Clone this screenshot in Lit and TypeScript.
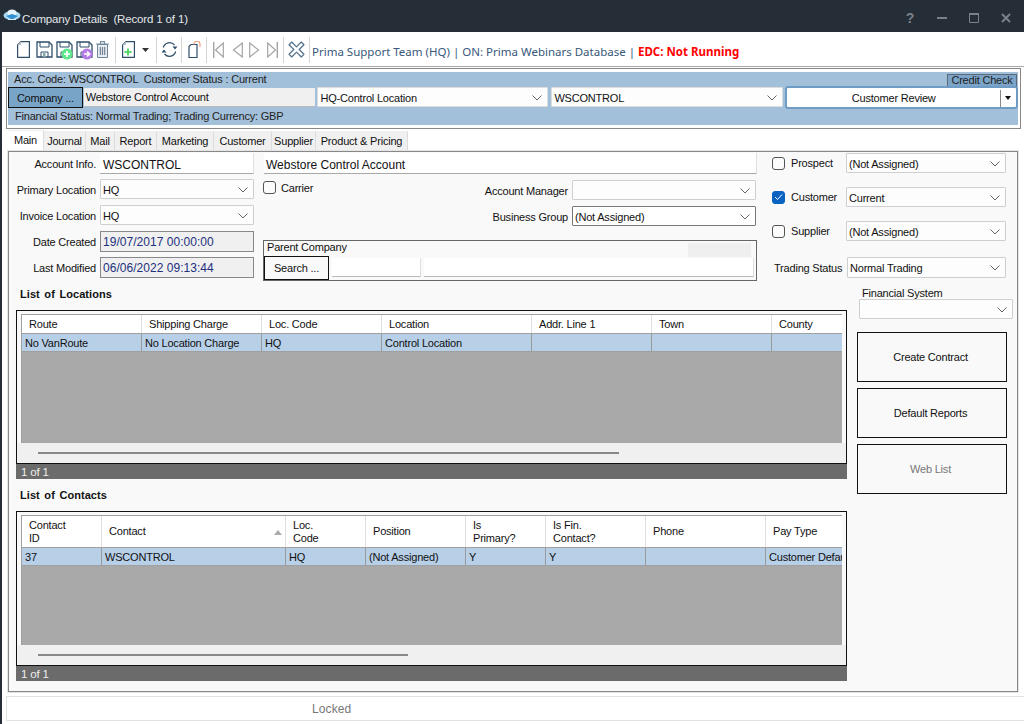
import { LitElement, html, css, svg } from "lit";
import { customElement } from "lit/decorators.js";

const navy = "#2f4f6b";
const chevron = html`<svg class="chev" width="10" height="6" viewBox="0 0 10 6"><path d="M.5.5 5 5 9.500.5" fill="none" stroke="#666" stroke-width="1"/></svg>`;

const floppy = svg`<path d="M1 1h12l3 3v12H1z" fill="#fff" stroke="${navy}" stroke-width="1.300"/><path d="M4 1v5h9V1" fill="none" stroke="${navy}"/><path d="M5 16.500V11h7v5.500" fill="none" stroke="${navy}"/><rect x="7" y="12" width="2.500" height="4" fill="#8aa"/>`;

const icons = {
  doc: html`<svg class="ic" width="13" height="17" viewBox="0 0 13 17"><path d="M4 .6h8.400v15.800H.6V4z" fill="#fff" stroke="${navy}" stroke-width="1.200"/><path d="M.6 4 4 .6v3.400z" fill="#b5c3cf"/></svg>`,
  save: html`<svg class="ic" width="17" height="17" viewBox="0 0 17 17">${floppy}</svg>`,
  saveAdd: html`<svg class="ic" width="17" height="19" viewBox="0 0 17 19">${floppy}<circle cx="11" cy="13" r="5.500" fill="#5fe88a"/><path d="M8 13h6M11 10v6" stroke="#fff" stroke-width="1.700"/></svg>`,
  saveNext: html`<svg class="ic" width="17" height="19" viewBox="0 0 17 19">${floppy}<circle cx="11" cy="13" r="5.500" fill="#b37ae8"/><path d="M8 13h4.500M11 10.500l2.500 2.500-2.500 2.500" fill="none" stroke="#fff" stroke-width="1.700"/></svg>`,
  trash: html`<svg class="ic" width="13" height="17" viewBox="0 0 13 17"><path d="M0 3h13M4.500 2.500V.7h4v1.800" fill="none" stroke="#7a8fa0" stroke-width="1.200"/><path d="M1.500 3.500h10v13h-10z" fill="#e8edf1" stroke="#6f8496"/><path d="M4.300 6v8M6.500 6v8M8.700 6v8" stroke="#6f8496" stroke-width="1.200"/></svg>`,
  docAdd: html`<svg class="ic" width="13" height="17" viewBox="0 0 13 17"><path d="M4 .6h8.400v15.800H.6V4z" fill="#fff" stroke="${navy}" stroke-width="1.200"/><path d="M.6 4 4 .6v3.400z" fill="#b5c3cf"/><path d="M2.500 11h7M6 7.500v7" stroke="#58d76a" stroke-width="2"/></svg>`,
  refresh: html`<svg class="ic" width="17" height="17" viewBox="0 0 17 17"><path d="M2.300 6.500A6.500 6.500 0 0 1 13.500 4M14.700 10.500A6.500 6.500 0 0 1 3.500 13" fill="none" stroke="${navy}" stroke-width="1.200"/><path d="M11.500 5.500h5L14 8.500zM.500 11.500h5L3 8.500z" fill="${navy}"/></svg>`,
  lock: html`<svg class="ic" width="13" height="17" viewBox="0 0 13 17"><path d="M1 5.500 3 3.500h6v13H1z" fill="#fff" stroke="${navy}" stroke-width="1.200"/><path d="M6 3.500A3 3 0 0 1 12 3v3" fill="none" stroke="#e8a080" stroke-width="1.200"/></svg>`,
  first: html`<svg class="ic" width="11" height="16" viewBox="0 0 11 16"><path d="M.7 0v16" stroke="#a4a4a4" stroke-width="1.400"/><path d="M10.300 1v14L2.500 8z" fill="#fff" stroke="#a4a4a4" stroke-width="1.200"/></svg>`,
  prev: html`<svg class="ic" width="11" height="16" viewBox="0 0 11 16"><path d="M10.300 1v14L1.500 8z" fill="#fff" stroke="#a4a4a4" stroke-width="1.200"/></svg>`,
  next: html`<svg class="ic" width="11" height="16" viewBox="0 0 11 16"><path d="M.7 1v14L9.500 8z" fill="#fff" stroke="#a4a4a4" stroke-width="1.200"/></svg>`,
  last: html`<svg class="ic" width="11" height="16" viewBox="0 0 11 16"><path d="M10.300 0v16" stroke="#a4a4a4" stroke-width="1.400"/><path d="M.7 1v14L8.500 8z" fill="#fff" stroke="#a4a4a4" stroke-width="1.200"/></svg>`,
  close: html`<svg class="ic" width="17" height="17" viewBox="0 0 16 16"><path d="M3.500 1 8 5.500 12.500 1 15 3.500 10.500 8 15 12.500 12.500 15 8 10.500 3.500 15 1 12.500 5.500 8 1 3.500z" fill="#fff" stroke="#54748e" stroke-width="1.200" stroke-linejoin="round"/></svg>`,
};

const locCols: [string, number, string][] = [
  ["Route", 120, "No VanRoute"],
  ["Shipping Charge", 120, "No Location Charge"],
  ["Loc. Code", 120, "HQ"],
  ["Location", 150, "Control Location"],
  ["Addr. Line 1", 120, ""],
  ["Town", 120, ""],
  ["County", 71, ""],
];
const conCols: [string, number, string][] = [
  ["Contact\nID", 80, "37"],
  ["Contact", 184, "WSCONTROL"],
  ["Loc.\nCode", 80, "HQ"],
  ["Position", 100, "(Not Assigned)"],
  ["Is\nPrimary?", 80, "Y"],
  ["Is Fin.\nContact?", 100, "Y"],
  ["Phone", 120, ""],
  ["Pay Type", 77, "Customer Default"],
];

const tabs: [string, number][] = [
  ["Main", 36], ["Journal", 42], ["Mail", 29], ["Report", 42], ["Marketing", 57],
  ["Customer", 58], ["Supplier", 44], ["Product & Pricing", 92],
];

@customElement("app-root")
export class AppRoot extends LitElement {
  static styles = css`
    :host { display: block; width: 1024px; height: 724px; overflow: hidden; background: #252d36;
      font: 11px "Liberation Sans", Arial, sans-serif; letter-spacing: -.2px; color: #111; }
    * { box-sizing: border-box; }
    .title { height: 32px; display: flex; align-items: center; color: #e4e7ea; padding: 6px 0 0 3px; }
    .title .logo { margin-right: 1px; margin-top: -8px; flex: none; }
    .title .t { white-space: pre; flex: 1; font-size: 11.500px; letter-spacing: -.15px; }
    .wb { display: flex; align-items: center; color: #7b8087; margin-right: 2px; margin-top: -2px; }
    .wb > * { width: 32px; display: flex; justify-content: center; align-items: center; }
    .wb b { font: bold 14px "Liberation Sans", sans-serif; }
    .body { height: 692px; margin-left: 2px; background: #fff; display: flex; flex-direction: column; }
    .toolbar { height: 35px; border-bottom: 1px solid #a9a9a9; display: flex; align-items: center; padding: 1px 0 0 15px; }
    .ic { flex: none; display: block; }
    .g { margin-right: 3px; }
    .tsep { width: 1px; height: 26px; background: #d5d5d5; flex: none; }
    .tool-text { margin: 3px 0 0 2px; font: 11.500px "Noto Sans", sans-serif; letter-spacing: 0; color: #38587a; white-space: pre; }
    .tool-text b { color: #f00; }
    .head { margin: 1px 0 0 4px; width: 1015px; height: 61px; border: 1px solid #888; padding: 3px 2px 3px 1px; background: #fff; }
    .blue { height: 53px; background: #a3c0da; display: flex; flex-direction: column; }
    .b1 { height: 15px; display: flex; align-items: center; justify-content: space-between; padding-left: 6px; color: #222; white-space: pre; }
    .b1 > span:first-child { padding-bottom: 1px; }
    .credit { width: 70px; height: 13px; margin: 1px 1px 0 0; background: #7ba4c8; border: 1px solid #5a6a78; display: flex; align-items: center; justify-content: center; line-height: 11px; }
    .b2 { height: 22px; display: flex; }
    .comp { width: 75px; height: 21px; background: #78a4c8; border: 1px solid #111; display: flex; align-items: center; justify-content: center; }
    .compname { width: 232px; height: 19px; margin: 1px 2px 0 1px; background: #f0f0f0; border-bottom: 1px solid #bbb; padding: 0 2px; display: flex; align-items: center; }
    .review { width: 233px; height: 23px; margin: -1px 0 0 2px; border: 2px solid #6f9cc4; border-radius: 3px; background: #fff; display: flex; align-items: center; padding-top: 1px; }
    .review span { flex: 1; text-align: center; }
    .review i { width: 16px; height: 17px; border-left: 1px solid #888; display: flex; align-items: center; justify-content: center; }
    .review i::after { content: ""; border: 3.500px solid transparent; border-top: 4px solid #111; border-bottom: 0; }
    .b3 { flex: 1; display: flex; align-items: center; padding: 0 0 2px 7px; color: #222; }
    .sel { display: flex; align-items: center; justify-content: space-between; height: 20px; background: #fdfdfd; border: 1px solid #cfcfcf; border-radius: 1px; padding: 1px 5px 0 2px; white-space: nowrap; flex: none; }
    .sel .chev { flex: none; }
    .w232 { width: 231px; margin-right: 3px; border-color: #ddd; }
    .w232b { width: 232px; border-color: #ddd; }
    .tabs { height: 21px; margin: 1px 0 0 6px; display: flex; align-items: flex-end; }
    .tab { height: 20px; background: #f0f0f0; border-right: 1px solid #dcdcdc; border-top: 1px solid #eee; display: flex; align-items: center; justify-content: center; padding-bottom: 2px; }
    .tab.on { height: 21px; background: #fff; padding-bottom: 3px; }
    .panel { margin-left: 6px; width: 1010px; height: 541px; border: 1px solid #888; background: #f9f9f9; display: flex; flex-direction: column; box-shadow: 0 0 0 1px #e4e4e4; }
    .form { height: 134px; display: flex; padding-top: 1px; }
    .lcol { width: 245px; display: flex; flex-direction: column; flex: none; }
    .row { display: flex; align-items: center; flex: none; }
    .lab { text-align: right; white-space: nowrap; }
    .l87 { width: 87px; margin-right: 4px; }
    .r21 { height: 21px; }
    .r20 { height: 20px; }
    .r20 .lab { padding-top: 1px; }
    .m5 { margin-top: 5px; }
    .m6 { margin-top: 6px; }
    .m14 { margin-top: 14px; }
    .big { font-size: 12px; letter-spacing: 0; background: #fff; border-bottom: 1px solid #a8a8a8; border-right: 1px solid #e0e0e0; padding: 3px 3px 0; height: 21px; display: flex; align-items: center; flex: none; }
    .name-field { padding-left: 2px; }
    .w154 { width: 154px; }
    .ro { width: 154px; height: 21px; border: 1px solid #888; background: #f0f0f0; color: #23307e; font-size: 12px; letter-spacing: .03px; display: flex; align-items: center; padding-left: 2px; flex: none; }
    .mcol { width: 493px; margin-left: 10px; flex: none; display: flex; flex-direction: column; }
    .mid { height: 52px; margin-top: 6px; display: flex; justify-content: space-between; }
    .carrier { display: flex; align-items: flex-start; margin-left: -1px; }
    .carrier .lab { padding-top: 2px; }
    .cb { width: 13px; height: 13px; border: 1px solid #555; border-radius: 3px; background: #fbfbfb; flex: none; display: block; }
    .cb.on { background: #0a63c0; border-color: #0a63c0; display: flex; align-items: center; justify-content: center; }
    .carrier .cb { margin: 1px 5px 0 0; }
    .amcol { display: flex; flex-direction: column; width: 260px; }
    .amrow { display: flex; align-items: center; justify-content: flex-end; height: 20px; }
    .amrow .lab { margin-right: 4px; padding-top: 1px; }
    .w184 { width: 184px; margin-right: 1px; }
    .dark { border-color: #777; background: #fff; }
    .parent { margin: 8px 0 0 -1px; width: 494px; height: 41px; border: 1px solid #666; background: #f9f9f9; display: flex; flex-direction: column; }
    .ptop { height: 15px; display: flex; justify-content: space-between; padding: 0 5px 0 3px; line-height: 13px; }
    .ptop i { width: 63px; height: 14px; margin-top: 2px; background: #efefef; display: block; }
    .pbot { display: flex; align-items: flex-start; height: 24px; }
    .search { width: 65px; height: 24px; background: #f9f9f9; border: 1px solid #111; display: flex; align-items: center; justify-content: center; flex: none; }
    .pf { height: 19px; margin: 2px 0 0 3px; background: #fff; border-bottom: 1px solid #bbb; border-right: 1px solid #ddd; flex: none; }
    .rcol { width: 234px; margin-left: 15px; flex: none; display: flex; flex-direction: column; }
    .rrow { display: flex; align-items: center; height: 20px; }
    .rrow .cb { margin-right: 6px; }
    .rrow .name { width: 55px; margin-top: -1px; white-space: nowrap; }
    .w160 { width: 160px; }
    .trow { height: 21px; display: flex; align-items: center; margin-top: 16px; padding-left: 2px; }
    .trow .lab { width: 71px; margin-right: 2px; text-align: left; }
    .trow .sel { height: 21px; width: 159px; }
    .low { flex: 1; display: flex; padding-left: 7px; }
    .lists { width: 831px; flex: none; }
    .lt { font: bold 11px/16px "Liberation Sans", sans-serif; height: 24px; padding: 0 0 0 4px; letter-spacing: .05px; word-spacing: 1.500px; }
    .lt.second { height: 32px; padding-top: 8px; }
    .box { border: 1px solid #111; padding: 3px 4px 0; }
    .box1 { height: 154px; }
    .box2 { height: 155px; }
    .grid { width: 821px; height: 129px; overflow: hidden; border-top: 1px solid #a0a0a0; border-left: 1px solid #a0a0a0; background: #a9a9a9; }
    .grid2 { height: 130px; }
    .hr { display: flex; background: #fff; border-bottom: 1px solid #a0a0a0; height: 19px; }
    .grid2 .hr { height: 32px; }
    .hc { flex: none; border-right: 1px solid #e0e0e0; padding-left: 7px; display: flex; align-items: center; white-space: pre-line; line-height: 12.500px; position: relative; }
    .dr { display: flex; background: #b8cfe8; border-bottom: 1px solid #a0a0a0; height: 18px; }
    .dc { flex: none; border-right: 1px solid #9a9a9a; padding: 0 0 0 3px; display: flex; align-items: center; white-space: nowrap; overflow: hidden; }
    .sort { position: absolute; right: 3px; top: 14px; border: 4px solid transparent; border-bottom: 5px solid #aaa; border-top: 0; }
    .sb { height: 20px; display: flex; align-items: center; background: #f0f0f0; margin: 0 -4px; width: 829px; padding-left: 21px; }
    .sb i { height: 2px; background: #888; display: block; }
    .st { height: 15px; background: #6b6b6b; color: #eee; padding-left: 5px; display: flex; align-items: center; font-size: 11.500px; }
    .side { margin-left: 10px; width: 157px; flex: none; display: flex; flex-direction: column; }
    .fs { margin: 0 0 0 5px; height: 13px; line-height: 14px; }
    .side .sel { width: 154px; margin: 0 0 0 2px; }
    .btn { width: 150px; height: 50px; border: 1px solid #111; background: #f9f9f9; display: flex; align-items: center; justify-content: center; padding-right: 3px; margin-top: 6px; flex: none; }
    .btn.first { margin-top: 13px; }
    .btn.off { color: #777; }
    .status { margin: 4px 0 0 4px; height: 25px; flex: none; background: #fff; border: 1px solid #e2e2e2; border-right: 0; display: flex; align-items: center; padding-left: 305px; color: #777; font-size: 12px; letter-spacing: .1px; }
  `;

  private sel(text: string, cls: string) {
    return html`<div class="sel ${cls}"><span>${text}</span>${chevron}</div>`;
  }

  private grid(cols: [string, number, string][], barWidth: number, second: boolean) {
    return html`
      <div class="box ${second ? "box2" : "box1"}">
        <div class="grid ${second ? "grid2" : ""}">
          <div class="hr">
            ${cols.map(
              ([h, w]) => html`<div class="hc" style="width:${w}px">${h}${h === "Contact" ? html`<span class="sort"></span>` : ""}</div>`
            )}
          </div>
          <div class="dr">${cols.map(([, w, d]) => html`<div class="dc" style="width:${w}px">${d}</div>`)}</div>
        </div>
        <div class="sb"><i style="width:${barWidth}px"></i></div>
      </div>
      <div class="st">1 of 1</div>
    `;
  }

  render() {
    const sepGap = (l: number, r: number) => html`<span class="tsep" style="margin:0 ${r}px 0 ${l}px"></span>`;
    return html`
      <div class="title">
        <svg class="logo" width="18" height="12" viewBox="0 0 18 12">
          <ellipse cx="9" cy="6.500" rx="8.500" ry="4.500" fill="#a9d8f0"/>
          <ellipse cx="9" cy="4" rx="4.500" ry="3.500" fill="#e8f4fb"/>
          <path d="M3 7 9 5l6 2-6 3.500z" fill="#2f8fd0"/>
          <path d="M5 10.500h8" stroke="#d8eef9"/>
        </svg>
        <span class="t">Company Details  (Record 1 of 1)</span>
        <div class="wb">
          <b>?</b>
          <span><svg width="10" height="2"><rect width="10" height="2" fill="#7b8087"/></svg></span>
          <span><svg width="10" height="10"><path d="M.5 1.500h9v8h-9z" fill="none" stroke="#7b8087"/><rect width="10" height="2" fill="#7b8087"/></svg></span>
          <span><svg width="10" height="10"><path d="M1 1l8 8M9 1l-8 8" stroke="#7b8087" stroke-width="2"/></svg></span>
        </div>
      </div>
      <div class="body">
        <div class="toolbar">
          <span class="g" style="margin-right:6px">${icons.doc}</span>
          <span class="g">${icons.save}</span>
          <span class="g" style="margin-top:2px">${icons.saveAdd}</span>
          <span class="g" style="margin-top:2px">${icons.saveNext}</span>
          ${icons.trash}
          ${sepGap(6, 6)}
          ${icons.docAdd}
          <svg class="ic" width="7" height="4" style="margin-left:7px"><path d="M0 0h7L3.500 4z" fill="#333"/></svg>
          ${sepGap(7, 4)}
          ${icons.refresh}
          ${sepGap(3, 6)}
          ${icons.lock}
          ${sepGap(5, 6)}
          ${icons.first}
          <span style="width:8px"></span>${icons.prev}
          <span style="width:6px"></span>${icons.next}
          <span style="width:7px"></span>${icons.last}
          ${sepGap(5, 4)}
          ${icons.close}
          ${sepGap(4, 0)}
          <span class="tool-text">Prima Support Team (HQ) | ON: Prima Webinars Database | <b>EDC: Not Running</b></span>
        </div>
        <div class="head">
          <div class="blue">
            <div class="b1"><span>Acc. Code: WSCONTROL  Customer Status : Current</span><span class="credit">Credit Check</span></div>
            <div class="b2">
              <div class="comp">Company ...</div>
              <div class="compname">Webstore Control Account</div>
              ${this.sel("HQ-Control Location", "w232")}
              ${this.sel("WSCONTROL", "w232b")}
              <div class="review"><span>Customer Review</span><i></i></div>
            </div>
            <div class="b3">Financial Status: Normal Trading; Trading Currency: GBP</div>
          </div>
        </div>
        <div class="tabs">
          ${tabs.map(([t, w], i) => html`<div class="tab ${i === 0 ? "on" : ""}" style="width:${w}px">${t}</div>`)}
        </div>
        <div class="panel">
          <div class="form">
            <div class="lcol">
              <div class="row r21"><div class="lab l87">Account Info.</div><div class="big w154">WSCONTROL</div></div>
              <div class="row r20 m5"><div class="lab l87">Primary Location</div>${this.sel("HQ", "w154")}</div>
              <div class="row r20 m6"><div class="lab l87">Invoice Location</div>${this.sel("HQ", "w154")}</div>
              <div class="row r21 m6"><div class="lab l87">Date Created</div><div class="ro">19/07/2017 00:00:00</div></div>
              <div class="row r21 m5"><div class="lab l87">Last Modified</div><div class="ro">06/06/2022 09:13:44</div></div>
            </div>
            <div class="mcol">
              <div class="big name-field">Webstore Control Account</div>
              <div class="mid">
                <div class="carrier"><span class="cb"></span><span class="lab">Carrier</span></div>
                <div class="amcol">
                  <div class="amrow"><span class="lab">Account Manager</span>${this.sel("", "w184")}</div>
                  <div class="amrow m6"><span class="lab">Business Group</span>${this.sel("(Not Assigned)", "w184 dark")}</div>
                </div>
              </div>
              <div class="parent">
                <div class="ptop"><span>Parent Company</span><i></i></div>
                <div class="pbot">
                  <div class="search">Search ...</div>
                  <div class="pf" style="width:89px"></div>
                  <div class="pf" style="width:330px"></div>
                </div>
              </div>
            </div>
            <div class="rcol">
              <div class="rrow"><span class="cb"></span><span class="name">Prospect</span>${this.sel("(Not Assigned)", "w160")}</div>
              <div class="rrow m14"><span class="cb on"><svg width="9" height="8" viewBox="0 0 9 8"><path d="M1 4l2.500 2.500L8 1.500" fill="none" stroke="#fff"/></svg></span><span class="name">Customer</span>${this.sel("Current", "w160")}</div>
              <div class="rrow m14"><span class="cb"></span><span class="name">Supplier</span>${this.sel("(Not Assigned)", "w160")}</div>
              <div class="trow"><span class="lab">Trading Status</span>${this.sel("Normal Trading", "")}</div>
            </div>
          </div>
          <div class="low">
            <div class="lists">
              <div class="lt">List of Locations</div>
              ${this.grid(locCols, 581, false)}
              <div class="lt second">List of Contacts</div>
              ${this.grid(conCols, 370, true)}
            </div>
            <div class="side">
              <div class="fs">Financial System</div>
              ${this.sel("", "")}
              <div class="btn first">Create Contract</div>
              <div class="btn">Default Reports</div>
              <div class="btn off">Web List</div>
            </div>
          </div>
        </div>
        <div class="status">Locked</div>
      </div>
    `;
  }
}
